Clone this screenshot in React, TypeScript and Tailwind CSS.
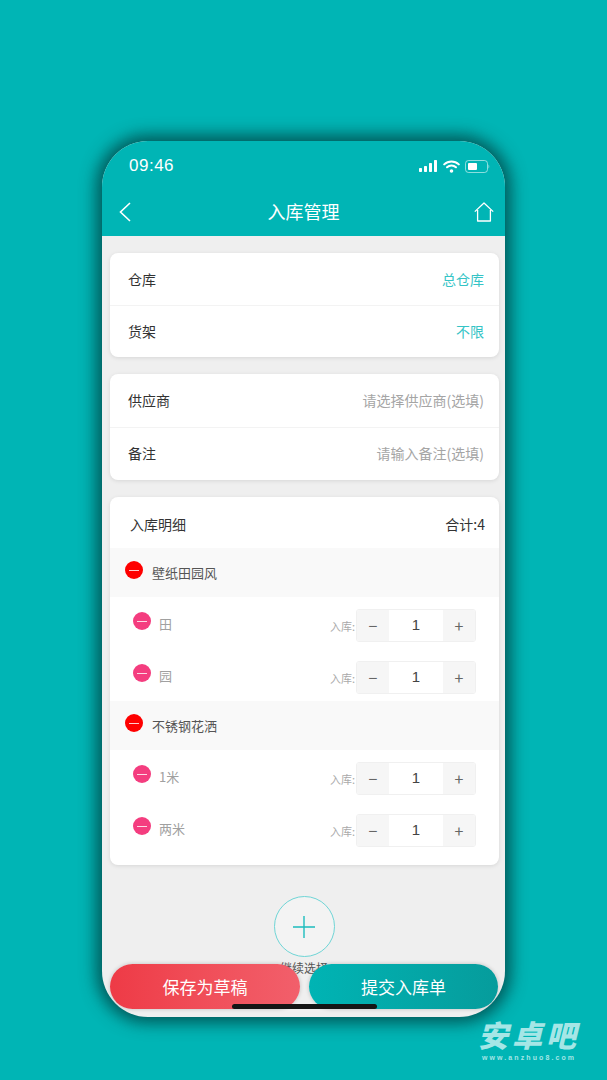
const font = { fontFamily: '"Noto Sans CJK SC", "Liberation Sans", sans-serif' }

function MinusBadge({ color, size }: { color: string; size: string }) {
  return (
    <span className={`flex shrink-0 items-center justify-center rounded-full ${color} ${size}`}>
      <span className="h-px w-[58%] bg-white/80" />
    </span>
  )
}

function FieldRow({ label, value, valueClass, height, border }: { label: string; value: string; valueClass: string; height: string; border?: boolean }) {
  return (
    <div className={`flex items-center justify-between pl-[18px] pr-[15px] ${height} ${border ? 'border-b border-[#f3f3f3]' : ''}`}>
      <span className="text-[14px] text-[#333]">{label}</span>
      <span className={`text-[14px] ${valueClass}`}>{value}</span>
    </div>
  )
}

function Stepper() {
  return (
    <div className="flex h-[33px] w-[120px] overflow-hidden rounded-[3px] border border-[#f0f0f0]">
      <span className="flex w-[32px] items-center justify-center bg-[#f6f6f6] text-[16px] text-[#666]">−</span>
      <span className="flex flex-1 items-center justify-center bg-white pt-[1px] text-[15px] text-[#444]" style={{ fontFamily: '"Liberation Sans", sans-serif' }}>1</span>
      <span className="flex w-[32px] items-center justify-center bg-[#f6f6f6] text-[16px] text-[#666]">+</span>
    </div>
  )
}

function ItemRow({ name }: { name: string }) {
  return (
    <div className="flex h-[52px] items-center justify-between pl-[23px] pr-[23px]">
      <div className="flex items-center gap-[8px] pt-[1px]">
        <MinusBadge color="bg-[#f43d7f]" size="mb-[5px] h-[18px] w-[18px]" />
        <span className="text-[13px] text-[#a0a0a0]">{name}</span>
      </div>
      <div className="flex items-center pt-[4px]">
        <span className="w-[26px] overflow-hidden whitespace-nowrap pt-[2px] text-[11px] text-[#aaa]">入库:</span>
        <Stepper />
      </div>
    </div>
  )
}

function GroupRow({ name }: { name: string }) {
  return (
    <div className="flex h-[49px] items-center gap-[9px] bg-[#f9f9f9] pl-[15px]">
      <MinusBadge color="bg-[#fe0000]" size="mb-[5px] h-[18px] w-[18px]" />
      <span className="text-[13px] text-[#555]">{name}</span>
    </div>
  )
}

export default function App() {
  return (
    <div className="relative h-[1080px] w-[607px] overflow-hidden bg-[#00b5b5]" style={font}>
      <div className="pl-[102px] pt-[141px]">
        <div className="relative h-[876px] w-[403px] overflow-hidden rounded-[46px] bg-[#efefef] shadow-[0_0_16px_6px_rgba(0,50,50,0.7)]">
          {/* Header */}
          <div className="h-[95px] bg-[#00b5b5] text-white">
            <div className="flex h-[50px] items-center justify-between pl-[27px] pr-[15px]">
              <span className="text-[17px] tracking-[0.5px]" style={{ fontFamily: '"Liberation Sans", sans-serif' }}>09:46</span>
              <div className="flex items-center gap-[5px]">
                <svg width="19" height="12" viewBox="0 0 19 12" fill="white">
                  <rect x="0" y="8" width="3" height="4" rx="0.7" />
                  <rect x="5" y="6" width="3" height="6" rx="0.7" />
                  <rect x="10" y="3" width="3" height="9" rx="0.7" />
                  <rect x="15" y="0" width="3" height="12" rx="0.7" />
                </svg>
                <svg width="17" height="13" viewBox="0 0 17 13" fill="none" stroke="white" strokeWidth="2" strokeLinecap="round">
                  <path d="M1.2 4.4a10.5 10.5 0 0 1 14.6 0" />
                  <path d="M4 7.3a6.5 6.5 0 0 1 9 0" />
                  <circle cx="8.5" cy="11" r="0.8" fill="white" />
                </svg>
                <svg width="25" height="13" viewBox="0 0 25 13" fill="none">
                  <rect x="0.5" y="0.5" width="22" height="12" rx="3" stroke="white" strokeOpacity="0.55" />
                  <rect x="3" y="3" width="9" height="7" rx="1" fill="white" />
                  <path d="M23.5 4.5c1 .4 1 3.6 0 4z" fill="white" fillOpacity="0.6" />
                </svg>
              </div>
            </div>
            <div className="flex h-[45px] items-center justify-between pb-[4px] pl-[17px] pr-[11px]">
              <svg width="12" height="20" viewBox="0 0 12 20" fill="none" stroke="white" strokeWidth="1.6">
                <path d="M11 1 1.5 10 11 19" />
              </svg>
              <span className="pl-[2px] text-[18px]">入库管理</span>
              <svg width="20" height="20" viewBox="0 0 20 20" fill="none" stroke="white" strokeWidth="1.3" strokeLinejoin="round">
                <path d="M0.8 9.6 10 1l9.2 8.6" />
                <path d="M3.6 8v11h12.8V8" />
              </svg>
            </div>
          </div>

          {/* Cards */}
          <div className="flex flex-col gap-[17px] pl-[8px] pr-[6px] pt-[17px]">
            <div className="rounded-[8px] bg-white shadow-[0_1px_4px_rgba(0,0,0,0.1)]">
              <FieldRow label="仓库" value="总仓库" valueClass="text-[#35c4c6]" height="h-[53px]" border />
              <FieldRow label="货架" value="不限" valueClass="text-[#35c4c6]" height="h-[51px]" />
            </div>
            <div className="rounded-[8px] bg-white shadow-[0_1px_4px_rgba(0,0,0,0.1)]">
              <FieldRow label="供应商" value="请选择供应商(选填)" valueClass="text-[#a5a5a5]" height="h-[54px]" border />
              <FieldRow label="备注" value="请输入备注(选填)" valueClass="text-[#a5a5a5]" height="h-[52px] pb-[2px]" />
            </div>
            <div className="h-[368px] overflow-hidden rounded-[8px] bg-white shadow-[0_1px_4px_rgba(0,0,0,0.1)]">
              <div className="flex h-[51px] items-center justify-between pl-[20px] pr-[14px] pt-[4px]">
                <span className="text-[14px] text-[#333]">入库明细</span>
                <span className="text-[14px] text-[#333]">合计:4</span>
              </div>
              <GroupRow name="壁纸田园风" />
              <ItemRow name="田" />
              <ItemRow name="园" />
              <GroupRow name="不锈钢花洒" />
              <ItemRow name="1米" />
              <ItemRow name="两米" />
            </div>
          </div>

          {/* Add more */}
          <div className="mt-[31px] flex flex-col items-center pl-[1px]">
            <div className="flex h-[61px] w-[61px] items-center justify-center rounded-full border border-[#6fd5d6] bg-[#f3f3f3]">
              <svg width="22" height="22" viewBox="0 0 22 22" stroke="#1cbcbd" strokeWidth="1.4">
                <path d="M0 11h22M11 0v22" />
              </svg>
            </div>
            <span className="mt-[2px] text-[12px] text-[#555]">继续选择</span>
          </div>

          {/* Bottom buttons */}
          <div className="absolute bottom-[8px] left-[8px] right-[7px] flex items-center gap-[9px]">
            <button className="h-[45px] w-[190px] rounded-full bg-gradient-to-r from-[#ee3a46] to-[#f25f6b] text-[17px] text-white shadow-[0_0_4px_rgba(0,0,0,0.2)]">
              保存为草稿
            </button>
            <button className="h-[45px] w-[189px] rounded-full bg-gradient-to-r from-[#00b4b4] to-[#069c9c] text-[17px] text-white shadow-[0_0_4px_rgba(0,0,0,0.2)]">
              提交入库单
            </button>
          </div>
          <div className="absolute bottom-[8px] left-[130px] h-[5px] w-[145px] rounded-full bg-[#151515]" />
        </div>
      </div>

      {/* Watermark */}
      <div className="absolute left-[477px] top-[1017px] flex w-[104px] flex-col items-center gap-[2px] text-[#a5e6e6]">
        <span className="whitespace-nowrap text-[30px] font-black italic leading-[34px] tracking-[4px]">安卓吧</span>
        <span className="text-[7px] font-bold leading-[10px] tracking-[2.1px]" style={{ fontFamily: '"Liberation Sans", sans-serif' }}>www.anzhuo8.com</span>
      </div>
    </div>
  )
}
